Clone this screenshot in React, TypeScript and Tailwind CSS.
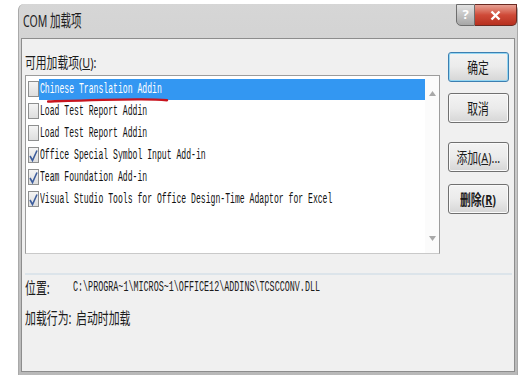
import React from 'react';

const items = [
  { name: 'Chinese Translation Addin', checked: false, selected: true },
  { name: 'Load Test Report Addin', checked: false, selected: false },
  { name: 'Load Test Report Addin', checked: false, selected: false },
  { name: 'Office Special Symbol Input Add-in', checked: true, selected: false },
  { name: 'Team Foundation Add-in', checked: true, selected: false },
  { name: 'Visual Studio Tools for Office Design-Time Adaptor for Excel', checked: true, selected: false },
];

function CheckBox({ checked }: { checked: boolean }) {
  return (
    <div className="ml-[2px] w-[11px] h-[16px] shrink-0 border border-[#8e8f8f] bg-linear-to-b from-[#f4f4f4] to-[#dedede] flex items-center justify-center">
      {checked && (
        <svg width="9" height="13" viewBox="0 0 9 13">
          <path d="M1 7 L3.5 11.5 L8 1.5" fill="none" stroke="#3d5d9c" strokeWidth="1.6" />
        </svg>
      )}
    </div>
  );
}

function DlgButton({ children, primary }: { children: React.ReactNode; primary?: boolean }) {
  return (
    <div
      className={
        'w-[61px] h-[30px] rounded-[3px] border flex items-center justify-center bg-linear-to-b from-[#f3f3f3] via-[#ebebeb] to-[#d6d6d6] text-[#1b1b1b] ' +
        (primary ? 'border-[#3c7fb1] shadow-[inset_0_0_0_1px_#94d6f2]' : 'border-[#707070] shadow-[inset_0_0_0_1px_#fafafa]')
      }
    >
      <span className="inline-block whitespace-nowrap text-[15px] leading-[17px] scale-x-[0.72]">{children}</span>
    </div>
  );
}

export default function App() {
  return (
    <div className="w-[530px] h-[377px] bg-white overflow-hidden font-['Noto_Sans','Noto_Sans_CJK_SC',sans-serif]">
      <div className="ml-[18px] mt-[4px] w-[500px] h-[371px] flex flex-col rounded-t-[6px] bg-linear-to-b from-[#d6d6d6] to-[#b9b9b9] border-x border-[#a9a9a9]">
        {/* title bar */}
        <div className="h-[34px] flex items-start justify-between shrink-0">
          <div className="pl-[4px] pt-[5px] text-[#1e1e1e]">
            <span className="inline-block origin-left whitespace-nowrap text-[17px] leading-[21px] scale-x-[0.62]">COM 加载项</span>
          </div>
          <div className="flex">
            <div className="w-[19px] h-[22px] rounded-bl-[5px] border border-[#6e6e6e] bg-linear-to-b from-[#e2e2e2] to-[#a7a7a7] flex items-center justify-center text-white font-bold text-[13px]">?</div>
            <div className="w-[42px] h-[22px] rounded-br-[5px] border border-l-0 border-[#6b2a22] bg-linear-to-b from-[#e6a094] via-[#cf4a38] to-[#b6301f] flex items-center justify-center">
              <svg width="11" height="11" viewBox="0 0 11 11">
                <path d="M1.5 1.5 L9.5 9.5 M9.5 1.5 L1.5 9.5" stroke="white" strokeWidth="2.4" />
              </svg>
            </div>
          </div>
        </div>

        {/* content */}
        <div className="mx-[2px] mb-[3px] flex-1 bg-[#f0f0f0] border border-[#8d8d8d] flex flex-col text-[#1b1b1b]">
          <div className="flex pt-[8px] pl-[3px]">
            <div className="w-[415px]">
              <div className="h-[28px] pt-[3px]">
                <span className="inline-block origin-left whitespace-nowrap text-[15px] leading-[17px] scale-x-[0.72]">
                  可用加载项(<span className="underline">U</span>):
                </span>
              </div>
              <div className="relative h-[179px] bg-white border border-[#9c9c9c] border-b-[#c9c9c9] flex">
                <div className="flex-1 pt-[2px] overflow-hidden">
                  {items.map((it, i) => (
                    <div key={i} className="h-[22px] flex items-center">
                      <CheckBox checked={it.checked} />
                      <div className={'flex-1 h-[21px] flex items-center pl-[1px] ' + (it.selected ? 'bg-[#3397f2] text-white' : 'text-[#111]')}>
                        <span className="inline-block origin-left whitespace-nowrap font-['Liberation_Mono',monospace] text-[14px] leading-[16px] scale-x-[0.58]">
                          {it.name}
                        </span>
                      </div>
                    </div>
                  ))}
                </div>
                <div className="w-[14px] flex flex-col items-center justify-between pt-[15px] pb-[12px] bg-[#fbfbfb]">
                  <svg width="7" height="5" viewBox="0 0 7 5"><path d="M0 5 L3.5 0 L7 5 Z" fill="#a8a8a8" /></svg>
                  <svg width="7" height="5" viewBox="0 0 7 5"><path d="M0 0 L3.5 5 L7 0 Z" fill="#a8a8a8" /></svg>
                </div>
                {/* red annotation underline */}
                <svg className="absolute left-[21px] top-[21px]" width="122" height="6" viewBox="0 0 122 6">
                  <path d="M1 4.5 C30 3.6 60 2.6 90 2.4 C105 2.3 113 2.6 120 3.2" fill="none" stroke="#c8141e" strokeWidth="2.4" strokeLinecap="round" />
                </svg>
              </div>
            </div>
            <div className="ml-[8px] pt-[5px] flex flex-col">
              <DlgButton primary>确定</DlgButton>
              <div className="mt-[11px]">
                <DlgButton>取消</DlgButton>
              </div>
              <div className="mt-[19px]">
                <DlgButton>
                  添加(<span className="underline">A</span>)...
                </DlgButton>
              </div>
              <div className="mt-[12px]">
                <DlgButton>
                  <span className="font-bold">删除(<span className="underline">R</span>)</span>
                </DlgButton>
              </div>
            </div>
          </div>

          <div className="mt-[19px] ml-[3px] mr-[2px] h-[2px] bg-[#dce4ea]" />

          <div className="mt-[3px] pl-[3px] h-[20px] flex items-center">
            <div className="w-[51px]">
              <span className="inline-block origin-left whitespace-nowrap text-[16px] leading-[18px] scale-x-[0.68]">位置:</span>
            </div>
            <span className="inline-block origin-left whitespace-nowrap font-['Liberation_Mono',monospace] text-[15px] leading-[18px] scale-x-[0.56]">
              {'C:\\PROGRA~1\\MICROS~1\\OFFICE12\\ADDINS\\TCSCCONV.DLL'}
            </span>
          </div>
          <div className="mt-[10px] pl-[3px] h-[20px] flex items-center">
            <div className="w-[51px]">
              <span className="inline-block origin-left whitespace-nowrap text-[16px] leading-[18px] scale-x-[0.68]">加载行为:</span>
            </div>
            <span className="inline-block origin-left whitespace-nowrap text-[16px] leading-[18px] scale-x-[0.68]">启动时加载</span>
          </div>
        </div>
      </div>
    </div>
  );
}
